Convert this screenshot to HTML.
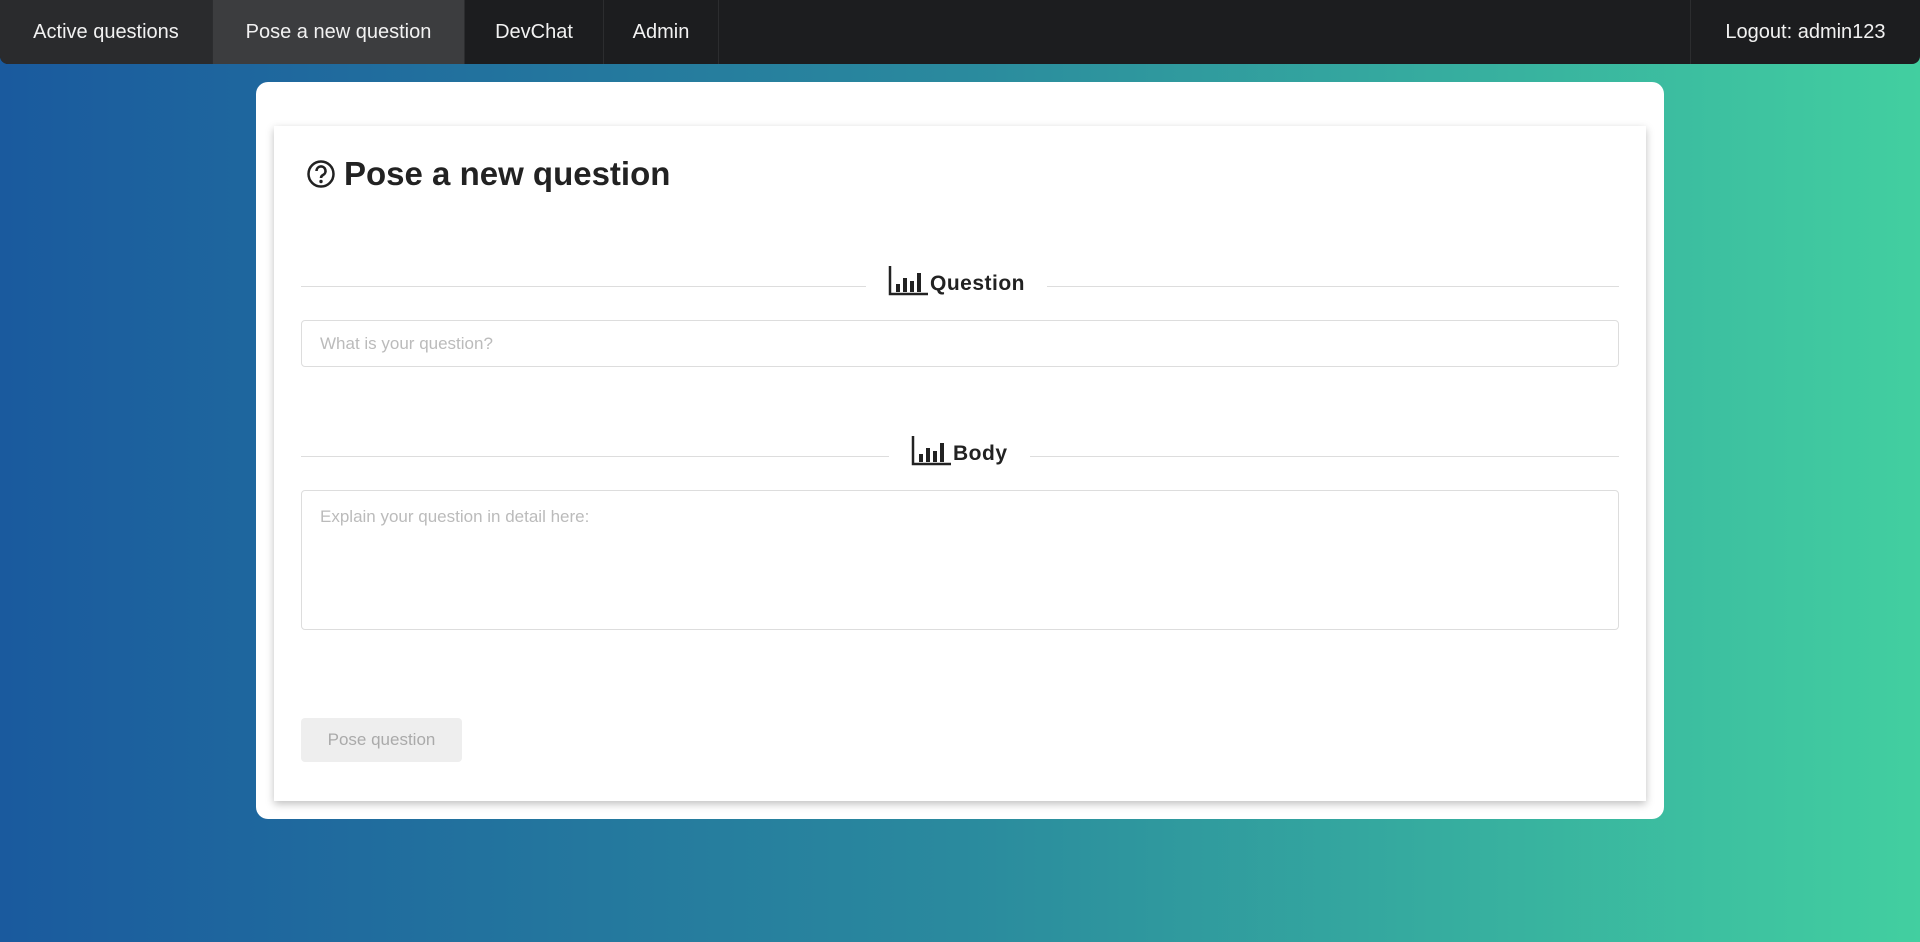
<!DOCTYPE html>
<html><head><meta charset="utf-8"><style>
*{box-sizing:border-box;margin:0;padding:0}
html,body{width:1920px;height:942px;overflow:hidden}
body{font-family:"Liberation Sans",sans-serif;background:linear-gradient(90deg,#1a5a9e 0%,#2a8a9e 50%,#42cfa0 100%);position:relative}
.nav{position:absolute;left:0;top:0;width:1920px;height:64px;background:#1c1d1f;border-radius:0 0 8px 8px;color:#fff;font-size:20px}
.nav a{position:absolute;top:0;height:64px;line-height:64px;text-align:center;color:#f2f2f2;border-right:1px solid #2c2d2f;white-space:nowrap}
.card{position:absolute;left:256px;top:82px;width:1408px;height:737px;background:#fff;border-radius:12px}
.panel{position:absolute;left:274px;top:126px;width:1372px;height:675px;background:#fff;box-shadow:0 3px 8px rgba(0,0,0,.25)}
h1{position:absolute;left:306px;top:155px;font-size:33px;font-weight:bold;color:#222;display:flex;align-items:center;gap:8px}
.div{position:absolute;left:301px;width:1318px;height:1px;background:#ddd}
.lab{position:absolute;background:#fff;padding:0 22px;font-size:21px;font-weight:bold;color:#222;letter-spacing:.5px;display:flex;align-items:flex-end;gap:2px}
.in{position:absolute;left:301px;width:1318px;border:1px solid #ddd;border-radius:4px;color:#bbb;font-size:17px;padding-left:18px}
.btn{position:absolute;left:301px;top:718px;width:161px;height:44px;background:#eee;border-radius:4px;color:#aaa;font-size:17px;text-align:center;line-height:44px}
</style></head><body>
<div class="nav">
<a style="left:0;width:213px;background:#2a2b2d;border-bottom-left-radius:8px">Active questions</a>
<a style="left:213px;width:252px;background:#3c3d3f">Pose a new question</a>
<a style="left:465px;width:139px">DevChat</a>
<a style="left:604px;width:115px">Admin</a>
<a style="left:1690px;width:230px;border-right:none;border-left:1px solid #2c2d2f">Logout: admin123</a>
</div>
<div class="card"></div>
<div class="panel"></div>
<h1><svg width="30" height="30" viewBox="0 0 30 30"><circle cx="15" cy="15" r="12.5" fill="none" stroke="#222" stroke-width="2.5"/><path d="M10.5 12a4.5 4.5 0 1 1 6.5 4c-1.5.8-2 1.5-2 3" fill="none" stroke="#222" stroke-width="2.6"/><circle cx="15" cy="22.5" r="1.7" fill="#222"/></svg>Pose a new question</h1>
<div class="div" style="top:286px"></div>
<div class="lab" style="left:866px;top:264px"><svg width="40" height="32" viewBox="0 0 40 32"><path d="M2 2v28h38" fill="none" stroke="#222" stroke-width="2.5"/><rect x="8" y="20" width="4" height="8" fill="#222"/><rect x="15" y="14" width="4" height="14" fill="#222"/><rect x="22" y="17" width="4" height="11" fill="#222"/><rect x="29" y="9" width="4" height="19" fill="#222"/></svg>Question</div>
<div class="in" style="top:320px;height:47px;line-height:45px">What is your question?</div>
<div class="div" style="top:456px"></div>
<div class="lab" style="left:889px;top:434px"><svg width="40" height="32" viewBox="0 0 40 32"><path d="M2 2v28h38" fill="none" stroke="#222" stroke-width="2.5"/><rect x="8" y="20" width="4" height="8" fill="#222"/><rect x="15" y="14" width="4" height="14" fill="#222"/><rect x="22" y="17" width="4" height="11" fill="#222"/><rect x="29" y="9" width="4" height="19" fill="#222"/></svg>Body</div>
<div class="in" style="top:490px;height:140px;padding-top:16px">Explain your question in detail here:</div>
<div class="btn">Pose question</div>
</body></html>
